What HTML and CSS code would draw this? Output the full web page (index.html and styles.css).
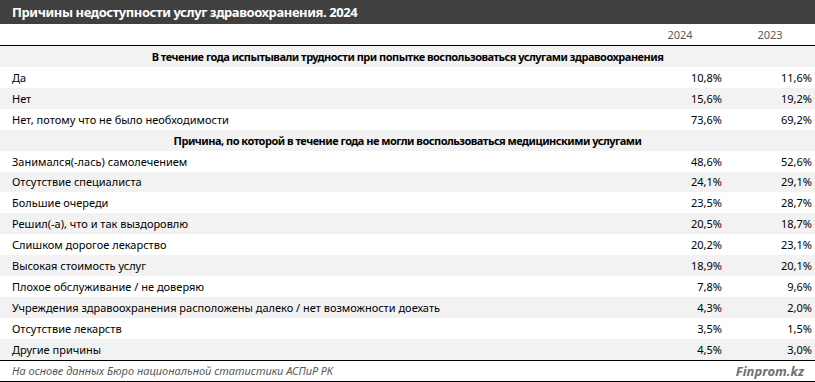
FILE: index.html
```html
<!DOCTYPE html>
<html lang="ru">
<head>
<meta charset="utf-8">
<title>Причины недоступности услуг здравоохранения. 2024</title>
<link rel="stylesheet" href="styles.css">
</head>
<body>
<div class="page">
  <div class="title">Причины недоступности услуг здравоохранения. 2024</div>
  <div class="row head">
    <div class="label"></div>
    <div class="val year">2024</div>
    <div class="val year">2023</div>
  </div>
  <div class="body">
    <div class="row section">В течение года испытывали трудности при попытке воспользоваться услугами здравоохранения</div>
    <div class="row"><div class="label">Да</div><div class="val">10,8%</div><div class="val">11,6%</div></div>
    <div class="row alt"><div class="label">Нет</div><div class="val">15,6%</div><div class="val">19,2%</div></div>
    <div class="row"><div class="label">Нет, потому что не было необходимости</div><div class="val">73,6%</div><div class="val">69,2%</div></div>
    <div class="row section">Причина, по которой в течение года не могли воспользоваться медицинскими услугами</div>
    <div class="row"><div class="label">Занимался(-лась) самолечением</div><div class="val">48,6%</div><div class="val">52,6%</div></div>
    <div class="row alt"><div class="label">Отсутствие специалиста</div><div class="val">24,1%</div><div class="val">29,1%</div></div>
    <div class="row"><div class="label">Большие очереди</div><div class="val">23,5%</div><div class="val">28,7%</div></div>
    <div class="row alt"><div class="label">Решил(-а), что и так выздоровлю</div><div class="val">20,5%</div><div class="val">18,7%</div></div>
    <div class="row"><div class="label">Слишком дорогое лекарство</div><div class="val">20,2%</div><div class="val">23,1%</div></div>
    <div class="row alt"><div class="label">Высокая стоимость услуг</div><div class="val">18,9%</div><div class="val">20,1%</div></div>
    <div class="row"><div class="label">Плохое обслуживание / не доверяю</div><div class="val">7,8%</div><div class="val">9,6%</div></div>
    <div class="row alt"><div class="label">Учреждения здравоохранения расположены далеко / нет возможности доехать</div><div class="val">4,3%</div><div class="val">2,0%</div></div>
    <div class="row"><div class="label">Отсутствие лекарств</div><div class="val">3,5%</div><div class="val">1,5%</div></div>
    <div class="row alt"><div class="label">Другие причины</div><div class="val">4,5%</div><div class="val">3,0%</div></div>
  </div>
  <div class="foot">
    <span class="source">На основе данных Бюро национальной статистики АСПиР РК</span>
    <span class="brand">Finprom.kz</span>
  </div>
</div>
</body>
</html>
```
FILE: styles.css
```css
html, body {
  margin: 0;
  padding: 0;
  background: #ffffff;
}
.page {
  width: 815px;
  height: 382px;
  font-family: "Noto Sans", "Open Sans", sans-serif;
  font-size: 11px;
  color: #000000;
  overflow: hidden;
}
.title {
  height: 24px;
  background: #404040;
  color: #ffffff;
  font-weight: bold;
  font-size: 13px;
  letter-spacing: -0.42px;
  line-height: 24px;
  padding-left: 12px;
}
.row {
  display: flex;
  align-items: center;
  height: 20.93px;
}
.row.head {
  height: 21px;
  border-bottom: 1px solid #000000;
}
.label {
  flex: 1;
  padding-left: 12px;
  white-space: nowrap;
}
.val {
  width: 87px;
  padding-right: 3px;
  text-align: right;
}
.val.year {
  text-align: center;
  padding-right: 0;
  width: 90px;
  color: #595959;
}
.row.alt, .row.section {
  background: #f2f2f2;
}
.row.section {
  justify-content: center;
  font-weight: bold;
  letter-spacing: -0.5px;
}
.foot {
  height: 20px;
  border-top: 1px solid #000000;
  border-bottom: 1px solid #000000;
  display: flex;
  align-items: center;
  justify-content: space-between;
  padding: 0 11px 0 12px;
}
.source {
  font-style: italic;
  color: #595959;
}
.brand {
  font-style: italic;
  font-weight: bold;
  font-size: 13px;
  color: #707070;
}
```
